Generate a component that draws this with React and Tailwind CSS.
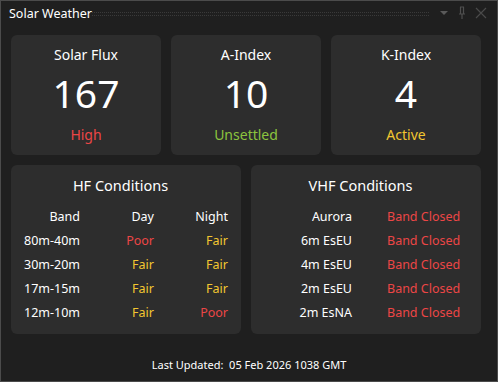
const RED = 'text-[#ec4646]';
const YELLOW = 'text-[#f2c630]';
const GREEN = 'text-[#8cc43e]';

const indices = [
  { title: 'Solar Flux', value: '167', status: 'High', color: RED },
  { title: 'A-Index', value: '10', status: 'Unsettled', color: GREEN },
  { title: 'K-Index', value: '4', status: 'Active', color: YELLOW },
];

const hf = [
  { band: '80m-40m', day: 'Poor', night: 'Fair' },
  { band: '30m-20m', day: 'Fair', night: 'Fair' },
  { band: '17m-15m', day: 'Fair', night: 'Fair' },
  { band: '12m-10m', day: 'Fair', night: 'Poor' },
];

const vhf = ['Aurora', '6m EsEU', '4m EsEU', '2m EsEU', '2m EsNA'];

const tone = (v) => (v === 'Poor' ? RED : YELLOW);

const App = () => {
  return (
    <div
      className="w-[498px] h-[382px] bg-[#1f1f1f] border border-[#4b4b4b] flex flex-col text-white overflow-hidden"
      style={{ fontFamily: '"Noto Sans", "Open Sans", sans-serif' }}
    >
      {/* Title bar */}
      <div className="h-[28px] shrink-0 flex items-start pt-[4px] pl-[8px] pr-[10px]">
        <span className="w-[83px] shrink-0 whitespace-nowrap text-[12.5px] leading-[18px]">Solar Weather</span>
        <div className="flex-1 mt-[7px] h-[4px] border-y border-dotted border-[#3a3a3a]" />
        <div className="flex items-center mt-[1px] ml-[10px] gap-[9px]">
          <svg width="10" height="14" viewBox="0 0 10 14">
            <path d="M1 5h8l-4 4z" fill="#5a5a5a" />
          </svg>
          <svg width="8" height="14" viewBox="0 0 8 14">
            <path d="M2 1h4M2.5 1v7M5.5 1v7M1 8h6M4 8v5" stroke="#4f4f4f" strokeWidth="1.2" fill="none" />
          </svg>
          <svg width="12" height="14" viewBox="0 0 12 14">
            <path d="M1 2l10 10M11 2L1 12" stroke="#4a4a4a" strokeWidth="1.2" />
          </svg>
        </div>
      </div>

      <div className="pl-[10px] pt-[6px]">
        {/* Indices */}
        <div className="grid grid-cols-3 gap-[10px] w-[470px]">
          {indices.map((c) => (
            <div key={c.title} className="h-[120px] bg-[#2d2d2d] rounded-[6px] flex flex-col items-center pt-[10px]">
              <div className="text-[14px] leading-[20px]">{c.title}</div>
              <div className="text-[39px] leading-[48px] mt-[4px]">{c.value}</div>
              <div className={`text-[14px] leading-[20px] mt-[8px] ${c.color}`}>{c.status}</div>
            </div>
          ))}
        </div>

        {/* Conditions */}
        <div className="grid grid-cols-2 gap-[10px] w-[470px] mt-[10px]">
          <div className="h-[169px] bg-[#2d2d2d] rounded-[6px] pt-[10px]">
            <div className="text-[14.5px] leading-[20px] text-center pr-[11px]">HF Conditions</div>
            <div className="grid grid-cols-[69px_74px_74px] text-[12.5px] leading-[24px] text-right mt-[10px]">
              <div>Band</div>
              <div>Day</div>
              <div>Night</div>
              {hf.map((r) => (
                <div key={r.band} className="contents">
                  <div>{r.band}</div>
                  <div className={tone(r.day)}>{r.day}</div>
                  <div className={tone(r.night)}>{r.night}</div>
                </div>
              ))}
            </div>
          </div>

          <div className="h-[169px] bg-[#2d2d2d] rounded-[6px] pt-[10px]">
            <div className="text-[14.5px] leading-[20px] text-center pr-[11px]">VHF Conditions</div>
            <div className="grid grid-cols-[101px_1fr] gap-x-[35px] text-[12.5px] leading-[24px] mt-[10px]">
              {vhf.map((b) => (
                <div key={b} className="contents">
                  <div className="text-right">{b}</div>
                  <div className={RED}>Band Closed</div>
                </div>
              ))}
            </div>
          </div>
        </div>
      </div>

      <div className="mt-[23px] text-center text-[11px] leading-[16px] whitespace-pre">
        Last Updated:  05 Feb 2026 1038 GMT
      </div>
    </div>
  );
};

export default App;
